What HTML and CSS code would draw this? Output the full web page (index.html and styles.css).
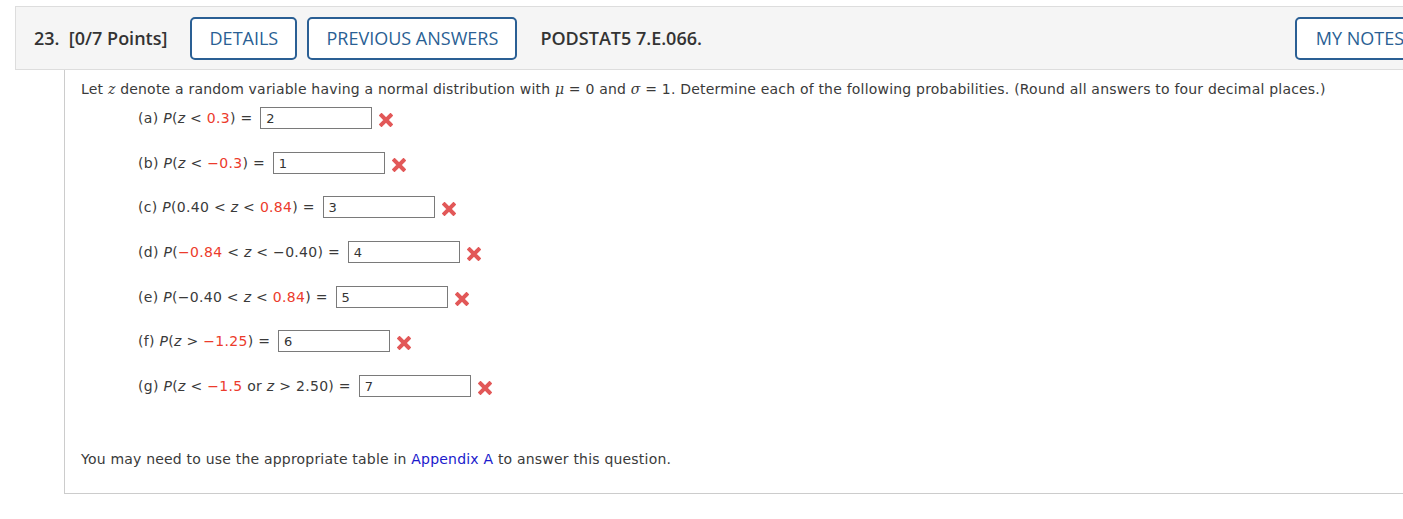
FILE: index.html
```html
<!DOCTYPE html>
<html>
<head>
<meta charset="utf-8">
<link rel="stylesheet" href="styles.css">
</head>
<body>
<div class="page">
  <div class="qhead">
    <span class="qnum">23.&nbsp; [0/7 Points]</span>
    <span class="btn btn-details">DETAILS</span>
    <span class="btn btn-prev">PREVIOUS ANSWERS</span>
    <span class="qid">PODSTAT5 7.E.066.</span>
    <span class="spacer"></span>
    <span class="btn btn-notes">MY NOTES</span>
  </div>
  <div class="qbody">
    <p class="intro">Let <i class="mv">z</i> denote a random variable having a normal distribution with <i class="greek">μ</i> = 0 and <i class="greek">σ</i> = 1. Determine each of the following probabilities. (Round all answers to four decimal places.)</p>
    <div class="parts">
      <div class="part"><span class="lbl">(a) <i>P</i>(<i>z</i> &lt; <span class="r">0.3</span>) = </span><span class="ans">2</span><svg class="x" viewBox="0 0 14 14"><path d="M2.5 2.5 L11.5 11.5 M11.5 2.5 L2.5 11.5"/></svg></div>
      <div class="part"><span class="lbl">(b) <i>P</i>(<i>z</i> &lt; <span class="r">−0.3</span>) = </span><span class="ans">1</span><svg class="x" viewBox="0 0 14 14"><path d="M2.5 2.5 L11.5 11.5 M11.5 2.5 L2.5 11.5"/></svg></div>
      <div class="part"><span class="lbl">(c) <i>P</i>(0.40 &lt; <i>z</i> &lt; <span class="r">0.84</span>) = </span><span class="ans">3</span><svg class="x" viewBox="0 0 14 14"><path d="M2.5 2.5 L11.5 11.5 M11.5 2.5 L2.5 11.5"/></svg></div>
      <div class="part"><span class="lbl">(d) <i>P</i>(<span class="r">−0.84</span> &lt; <i>z</i> &lt; −0.40) = </span><span class="ans">4</span><svg class="x" viewBox="0 0 14 14"><path d="M2.5 2.5 L11.5 11.5 M11.5 2.5 L2.5 11.5"/></svg></div>
      <div class="part"><span class="lbl">(e) <i>P</i>(−0.40 &lt; <i>z</i> &lt; <span class="r">0.84</span>) = </span><span class="ans">5</span><svg class="x" viewBox="0 0 14 14"><path d="M2.5 2.5 L11.5 11.5 M11.5 2.5 L2.5 11.5"/></svg></div>
      <div class="part"><span class="lbl">(f) <i>P</i>(<i>z</i> &gt; <span class="r">−1.25</span>) = </span><span class="ans">6</span><svg class="x" viewBox="0 0 14 14"><path d="M2.5 2.5 L11.5 11.5 M11.5 2.5 L2.5 11.5"/></svg></div>
      <div class="part"><span class="lbl">(g) <i>P</i>(<i>z</i> &lt; <span class="r">−1.5</span> or <i>z</i> &gt; 2.50) = </span><span class="ans">7</span><svg class="x" viewBox="0 0 14 14"><path d="M2.5 2.5 L11.5 11.5 M11.5 2.5 L2.5 11.5"/></svg></div>
    </div>
    <p class="note">You may need to use the appropriate table in <a class="link">Appendix A</a> to answer this question.</p>
  </div>
</div>
</body>
</html>
```
FILE: styles.css
```css
html, body {
  margin: 0;
  padding: 0;
  background: #ffffff;
  overflow: hidden;
}
.page {
  width: 1415px;
  margin-left: 15px;
  padding-top: 6px;
}
.qhead {
  display: flex;
  align-items: center;
  box-sizing: border-box;
  height: 64px;
  background: #f5f5f5;
  border: 1px solid #dddddd;
  padding-left: 18px;
  font-family: "Open Sans", "Liberation Sans", sans-serif;
}
.qnum {
  font-weight: 600;
  font-size: 18px;
  color: #333333;
  margin-right: 23px;
  white-space: nowrap;
}
.btn {
  display: inline-flex;
  align-items: center;
  justify-content: center;
  flex: none;
  height: 43px;
  box-sizing: border-box;
  border: 2px solid #2a5f94;
  border-radius: 5px;
  background: #ffffff;
  color: #2a5f94;
  font-size: 18px;
  font-weight: 500;
  white-space: nowrap;
}
.btn-details { width: 107px; margin-right: 10px; }
.btn-prev { width: 210px; margin-right: 23px; }
.btn-notes { width: 130px; margin-right: 4px; }
.qid {
  font-weight: 600;
  font-size: 18px;
  color: #333333;
  white-space: nowrap;
}
.spacer { flex: 1; }

.qbody {
  margin-left: 49px;
  border-left: 1px solid #cccccc;
  border-bottom: 1px solid #cccccc;
  padding: 10px 0 25px 16px;
  font-family: "DejaVu Sans", Verdana, sans-serif;
  font-size: 14px;
  letter-spacing: 0.2px;
  color: #3a3a3a;
}
.intro {
  margin: 0;
  line-height: 18px;
  white-space: nowrap;
}
.mv, .greek {
  font-family: "DejaVu Serif", serif;
}
.parts {
  display: flex;
  flex-direction: column;
  gap: 22.67px;
  margin: 9px 0 0 57px;
}
.part {
  display: flex;
  align-items: center;
  height: 22px;
}
.lbl { white-space: pre; letter-spacing: 0.3px; }
.r { color: #ec3b2c; }
.ans {
  display: inline-block;
  width: 112px;
  height: 22px;
  box-sizing: border-box;
  border: 1px solid #7a7a7a;
  padding: 2px 0 0 5px;
  margin-left: 3px;
  line-height: 17px;
  font-size: 13px;
  letter-spacing: 0;
  color: #333333;
}
.x {
  width: 14px;
  height: 14px;
  margin-left: 7px;
  margin-top: 4px;
}
.x path {
  stroke: #e25858;
  stroke-width: 4;
  stroke-linecap: square;
  fill: none;
}
.note {
  margin: 53px 0 0 0;
  line-height: 18px;
}
.link {
  color: #1a1acc;
}
```
